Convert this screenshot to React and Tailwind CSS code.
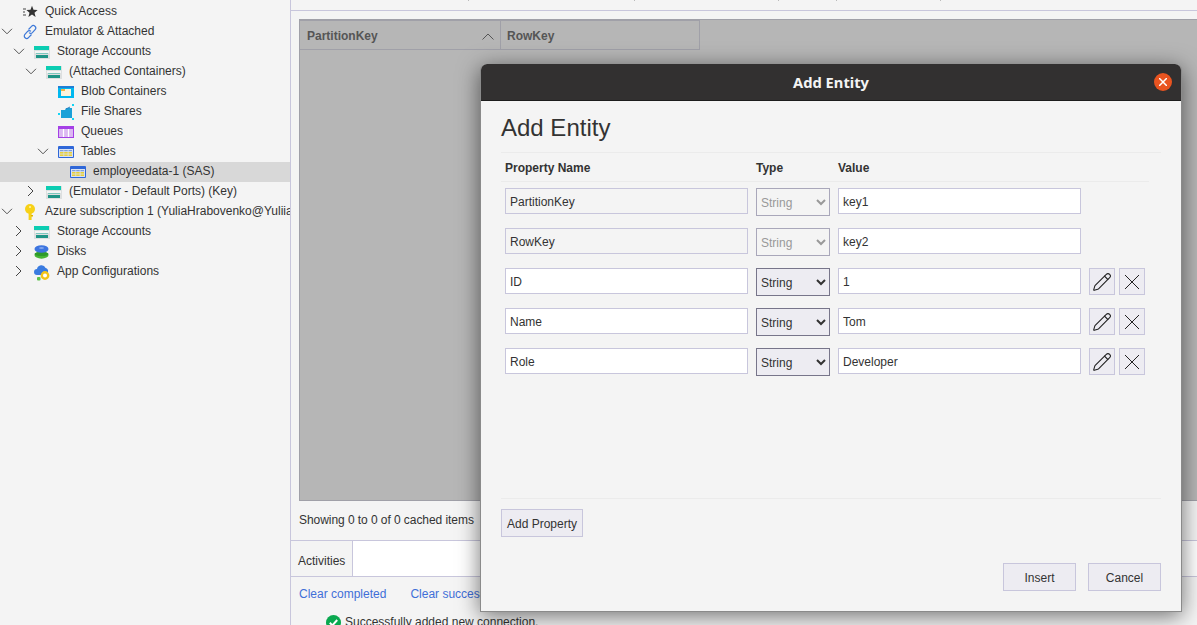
// App.jsx - Storage Explorer "Add Entity" dialog
import { Pencil } from "lucide-react";

const ChevronDown = () => (
    <svg width="12" height="7" viewBox="0 0 12 7" fill="none" stroke="#555" strokeWidth="1">
        <path d="M1 .8 6 5.8 11 .8" />
    </svg>
);

const ChevronRight = () => (
    <svg width="7" height="12" viewBox="0 0 7 12" fill="none" stroke="#444" strokeWidth="1">
        <path d="M1 1 6 6 1 11" />
    </svg>
);

const QuickIcon = () => (
    <svg width="16" height="14" viewBox="0 0 16 14">
        <path d="M1 4h3M1 7h2M1 10h3" stroke="#444" strokeWidth="1" />
        <path d="M10 .8 11.5 4.8 15.6 5 12.5 7.7 13.6 12 10 9.6 6.4 12 7.5 7.7 4.4 5 8.5 4.8Z" fill="#333" />
    </svg>
);

const LinkIcon = () => (
    <svg width="16" height="16" viewBox="0 0 16 16" fill="none" stroke="#3c78d8" strokeWidth="1.2">
        <path d="M6.5 5.5 9.5 2.4a2.3 2.3 0 0 1 3.6 3.2L10.4 8.6a2.3 2.3 0 0 1-3.3 0" />
        <path d="M9.5 10.5 6.5 13.6a2.3 2.3 0 0 1-3.6-3.2L5.6 7.4a2.3 2.3 0 0 1 3.3 0" />
    </svg>
);

const StorageIcon = () => (
    <svg width="16" height="13" viewBox="0 0 16 13">
        <rect width="16" height="13" fill="#dcdfdf" />
        <rect width="15" height="4" fill="#0ccdb2" />
        <rect x="1" y="5" width="14" height="2" fill="#f2f4f4" />
        <rect x="2" y="7" width="12" height="1" fill="#7cc8bd" />
        <rect x="2" y="9" width="12" height="3" fill="#1e9486" />
    </svg>
);

const BlobIcon = () => (
    <svg width="16" height="12" viewBox="0 0 16 12">
        <rect width="16" height="12" fill="#00b8f0" />
        <rect width="16" height="2" fill="#1f7fd6" />
        <rect x="3" y="3" width="10" height="7" fill="#fbf3dc" />
        <rect x="3" y="3" width="4" height="2" fill="#f2b544" />
    </svg>
);

const FileIcon = () => (
    <svg width="16" height="16" viewBox="0 0 16 16">
        <path d="M3 6h4l1-2h6v10H3Z" fill="#1ba1d8" />
        <path d="M8 5 12 3" stroke="#2a7fc0" strokeWidth="1" />
        <rect x="0" y="9" width="2" height="2" fill="#14d4f4" />
        <rect x="14" y="0" width="2" height="2" fill="#14d4f4" />
        <rect x="14" y="14" width="2" height="2" fill="#14d4f4" />
    </svg>
);

const QueueIcon = () => (
    <svg width="16" height="12" viewBox="0 0 16 12">
        <rect width="16" height="12" fill="#a43fe6" />
        <rect x="1" y="3" width="14" height="8" fill="#dcb8f2" />
        <path d="M5.5 3v8M10.5 3v8" stroke="#fff" strokeWidth="1.2" />
    </svg>
);

const TableIcon = () => (
    <svg width="16" height="12" viewBox="0 0 16 12">
        <rect width="16" height="12" rx="1" fill="#2f67d8" />
        <rect x="1" y="3" width="14" height="8" fill="#d9e2f2" />
        <rect x="2" y="4" width="3.5" height="1.2" fill="#7f9fdc" />
        <rect x="6.2" y="4" width="3.5" height="1.2" fill="#7f9fdc" />
        <rect x="10.5" y="4" width="3.5" height="1.2" fill="#7f9fdc" />
        <rect x="2" y="6" width="3.5" height="1.6" fill="#e8cf3a" />
        <rect x="6.2" y="6" width="3.5" height="1.6" fill="#e8cf3a" />
        <rect x="10.5" y="6" width="3.5" height="1.6" fill="#e8cf3a" />
        <rect x="2" y="8.4" width="3.5" height="1.6" fill="#e8cf3a" />
        <rect x="6.2" y="8.4" width="3.5" height="1.6" fill="#e8cf3a" />
        <rect x="10.5" y="8.4" width="3.5" height="1.6" fill="#e8cf3a" />
    </svg>
);

const KeyIcon = () => (
    <svg width="12" height="16" viewBox="0 0 12 16">
        <circle cx="6" cy="5" r="5" fill="#f7d117" />
        <rect x="4.6" y="8" width="3" height="8" fill="#f7d117" />
        <rect x="7" y="11" width="2" height="1.5" fill="#e0b400" />
        <circle cx="6" cy="3" r="1" fill="#fff3a8" />
    </svg>
);

const DiskIcon = () => (
    <svg width="15" height="14" viewBox="0 0 15 14">
        <ellipse cx="7.5" cy="10" rx="7" ry="3.7" fill="#47b536" />
        <ellipse cx="7.5" cy="9" rx="7" ry="2" fill="#2f9a2a" />
        <ellipse cx="7.5" cy="4" rx="7" ry="3.8" fill="#3d75e0" />
        <ellipse cx="7.5" cy="3" rx="2.5" ry="1" fill="#7fa4ec" />
    </svg>
);

const ConfigIcon = () => (
    <svg width="16" height="17" viewBox="0 0 16 17">
        <path d="M3 11a3 3 0 0 1 0-6 4.5 4.5 0 0 1 8.6-1A3.5 3.5 0 0 1 14 8v3Z" fill="#3a7be0" />
        <circle cx="11" cy="11.5" r="3.2" fill="#fff" stroke="#f5c518" strokeWidth="2.4" />
        <rect x="3" y="13" width="3.5" height="3.5" rx="1" fill="#5cc24a" />
    </svg>
);

const CrossIcon = ({ size, color, width }) => (
    <svg width={size} height={size} viewBox={`0 0 ${size} ${size}`} stroke={color} strokeWidth={width}>
        <path d={`M0 0 ${size} ${size}M${size} 0 0 ${size}`} />
    </svg>
);

const treeRows = [
    { label: "Quick Access", level: 0, icon: <QuickIcon /> },
    { label: "Emulator & Attached", level: 0, open: true, icon: <LinkIcon /> },
    { label: "Storage Accounts", level: 1, open: true, icon: <StorageIcon /> },
    { label: "(Attached Containers)", level: 2, open: true, icon: <StorageIcon /> },
    { label: "Blob Containers", level: 3, icon: <BlobIcon /> },
    { label: "File Shares", level: 3, icon: <FileIcon /> },
    { label: "Queues", level: 3, icon: <QueueIcon /> },
    { label: "Tables", level: 3, open: true, icon: <TableIcon /> },
    { label: "employeedata-1 (SAS)", level: 4, selected: true, icon: <TableIcon /> },
    { label: "(Emulator - Default Ports) (Key)", level: 2, open: false, icon: <StorageIcon /> },
    { label: "Azure subscription 1 (YuliaHrabovenko@YuliiaHrabovenko.onmicrosoft.com)", level: 0, open: true, icon: <KeyIcon /> },
    { label: "Storage Accounts", level: 1, open: false, icon: <StorageIcon /> },
    { label: "Disks", level: 1, open: false, icon: <DiskIcon /> },
    { label: "App Configurations", level: 1, open: false, icon: <ConfigIcon /> },
];

function TreeRow({ row }) {
    return (
        <div
            className={`flex items-center h-5 pb-[2px] ${row.selected ? "bg-[#d8d8d8]" : ""}`}
            style={{ paddingLeft: row.level * 12 }}
        >
            <span className="flex items-center justify-center w-[13px] shrink-0">
                {row.open === true && <ChevronDown />}
                {row.open === false && <ChevronRight />}
            </span>
            <span className="flex items-center justify-center w-[17px] ml-2 shrink-0 translate-y-px">{row.icon}</span>
            <span className="ml-[7px] whitespace-nowrap">{row.label}</span>
        </div>
    );
}

function EntityRow({ name, value, locked }) {
    return (
        <div className="flex items-start gap-2 h-10">
            <input
                readOnly
                value={name}
                className={`w-[243px] h-[26px] px-1 pt-[2px] border border-[#c8c6dc] text-[#333] outline-none ${locked ? "bg-[#f4f4f4]" : "bg-white"}`}
            />
            <select
                disabled={locked}
                defaultValue="String"
                className={`w-[74px] h-[28px] pt-[2px] border ${locked ? "border-[#a9a7ba] text-[#999] bg-[#f4f4f4]" : "border-[#77758a] text-[#333] bg-[#edecf2]"}`}
            >
                <option>String</option>
            </select>
            <input
                readOnly
                value={value}
                className="w-[243px] h-[26px] px-1 pt-[2px] border border-[#c8c6dc] bg-white text-[#333] outline-none"
            />
            {!locked && (
                <div className="flex gap-1">
                    <button className="flex items-center justify-center w-[26px] h-[27px] border border-[#c8c6dc] bg-[#edecf2]">
                        <Pencil size={20} strokeWidth={1.3} color="#222" />
                    </button>
                    <button className="flex items-center justify-center w-[26px] h-[27px] border border-[#c8c6dc] bg-[#edecf2]">
                        <CrossIcon size={14} color="#222" width={1} />
                    </button>
                </div>
            )}
        </div>
    );
}

function AddEntityDialog() {
    return (
        <div className="absolute left-[480px] top-[64px] w-[702px] h-[548px] flex flex-col bg-[#f4f4f4] border border-[#8a8a8a] border-t-0 rounded-t-md shadow-[0_4px_22px_rgba(0,0,0,0.55)]">
            <div className="relative flex items-center justify-center h-[37px] shrink-0 bg-[#323030] border-b border-[#1c1c1c] rounded-t-md">
                <span className="text-[14.7px] font-bold text-[#f4f4f4] font-['Noto_Sans',sans-serif]">Add Entity</span>
                <span className="absolute right-[9px] top-[9px] flex items-center justify-center w-[18px] h-[18px] rounded-full bg-[#e95420]">
                    <CrossIcon size={8} color="#fff" width={1.5} />
                </span>
            </div>
            <div className="flex-1 flex flex-col px-5">
                <h1 className="h-[52px] pt-[11px] text-[24px] leading-[32px] text-[#333] border-b border-[#ebebeb]">Add Entity</h1>
                <div className="flex items-center h-[29px] mr-3 px-1 pt-[2px] gap-2 font-bold text-[#333] border-b border-[#ebebeb]">
                    <span className="w-[243px]">Property Name</span>
                    <span className="w-[74px]">Type</span>
                    <span>Value</span>
                </div>
                <div className="pt-[6px] px-1 h-[316px]">
                    <EntityRow name="PartitionKey" value="key1" locked />
                    <EntityRow name="RowKey" value="key2" locked />
                    <EntityRow name="ID" value="1" />
                    <EntityRow name="Name" value="Tom" />
                    <EntityRow name="Role" value="Developer" />
                </div>
                <div className="pt-[10px] border-t border-[#ebebeb]">
                    <button className="w-[82px] h-[28px] pt-[2px] border border-[#c8c6dc] bg-[#edecf2] text-[#333]">Add Property</button>
                </div>
                <div className="flex justify-end gap-3 mt-[26px]">
                    <button className="w-[73px] h-[28px] pt-px border border-[#c8c6dc] bg-[#edecf2] text-[#333]">Insert</button>
                    <button className="w-[73px] h-[28px] pt-px border border-[#c8c6dc] bg-[#edecf2] text-[#333]">Cancel</button>
                </div>
            </div>
        </div>
    );
}

export default function App() {
    return (
        <div className="relative flex w-[1197px] h-[625px] overflow-hidden bg-[#f4f4f4] text-[12px] text-[#333] font-['Liberation_Sans',Arial,sans-serif]">
            {/* Tree */}
            <aside className="w-[291px] shrink-0 pt-[2px] overflow-hidden border-r border-[#c8c6dc]">
                {treeRows.map((row, i) => (
                    <TreeRow key={i} row={row} />
                ))}
            </aside>

            {/* Main */}
            <main className="flex-1 flex flex-col min-w-0">
                <div className="flex h-[11px] shrink-0 border-b border-[#c8c6dc]">
                    <span className="ml-[177px] w-px h-px bg-[#bbb]" />
                    <span className="ml-[165px] w-px h-px bg-[#bbb]" />
                    <span className="ml-[143px] w-px h-px bg-[#bbb]" />
                    <span className="ml-[57px] w-px h-px bg-[#bbb]" />
                    <span className="ml-[103px] w-px h-px bg-[#bbb]" />
                </div>

                <div className="ml-2 mt-2 h-[482px] shrink-0 bg-[#b6b6b6] border border-[#a0a0a8] border-r-0">
                    <div className="flex h-[30px] font-bold text-[#555]">
                        <div className="flex items-center justify-between w-[201px] pl-[7px] pr-[6px] pt-[2px] border border-l-0 border-[#a0a0a8]">
                            <span>PartitionKey</span>
                            <svg width="12" height="7" viewBox="0 0 12 7" fill="none" stroke="#555" strokeWidth="1">
                                <path d="M.5 6.5 6 1 11.5 6.5" />
                            </svg>
                        </div>
                        <div className="flex items-center w-[199px] pl-[6px] pt-[2px] border border-l-0 border-[#a0a0a8]">
                            <span>RowKey</span>
                        </div>
                    </div>
                </div>

                <div className="flex items-center h-[39px] shrink-0 pl-2 pb-[2px] tracking-[-0.06px]">Showing 0 to 0 of 0 cached items</div>

                {/* Activities */}
                <div className="flex h-[37px] shrink-0 border-y border-[#c8c6dc] bg-white">
                    <div className="flex items-center w-[62px] pl-[7px] pt-[5px] bg-[#f4f4f4] border-r border-[#c8c6dc]">Activities</div>
                </div>
                <div className="flex items-center gap-6 h-[33px] shrink-0 pl-2 text-[#3f6fd8]">
                    <span>Clear completed</span>
                    <span>Clear successful</span>
                </div>
                <div className="flex items-center gap-1 pl-[35px] mt-[3px] whitespace-nowrap">
                    <svg className="shrink-0" width="15" height="15" viewBox="0 0 15 15">
                        <circle cx="7.5" cy="7.5" r="7.5" fill="#0aa84f" />
                        <path d="M3.8 7.8 6.4 10.4 11.2 5" fill="none" stroke="#fff" strokeWidth="2" />
                    </svg>
                    <span>Successfully added new connection.</span>
                </div>
            </main>

            <AddEntityDialog />
        </div>
    );
}
